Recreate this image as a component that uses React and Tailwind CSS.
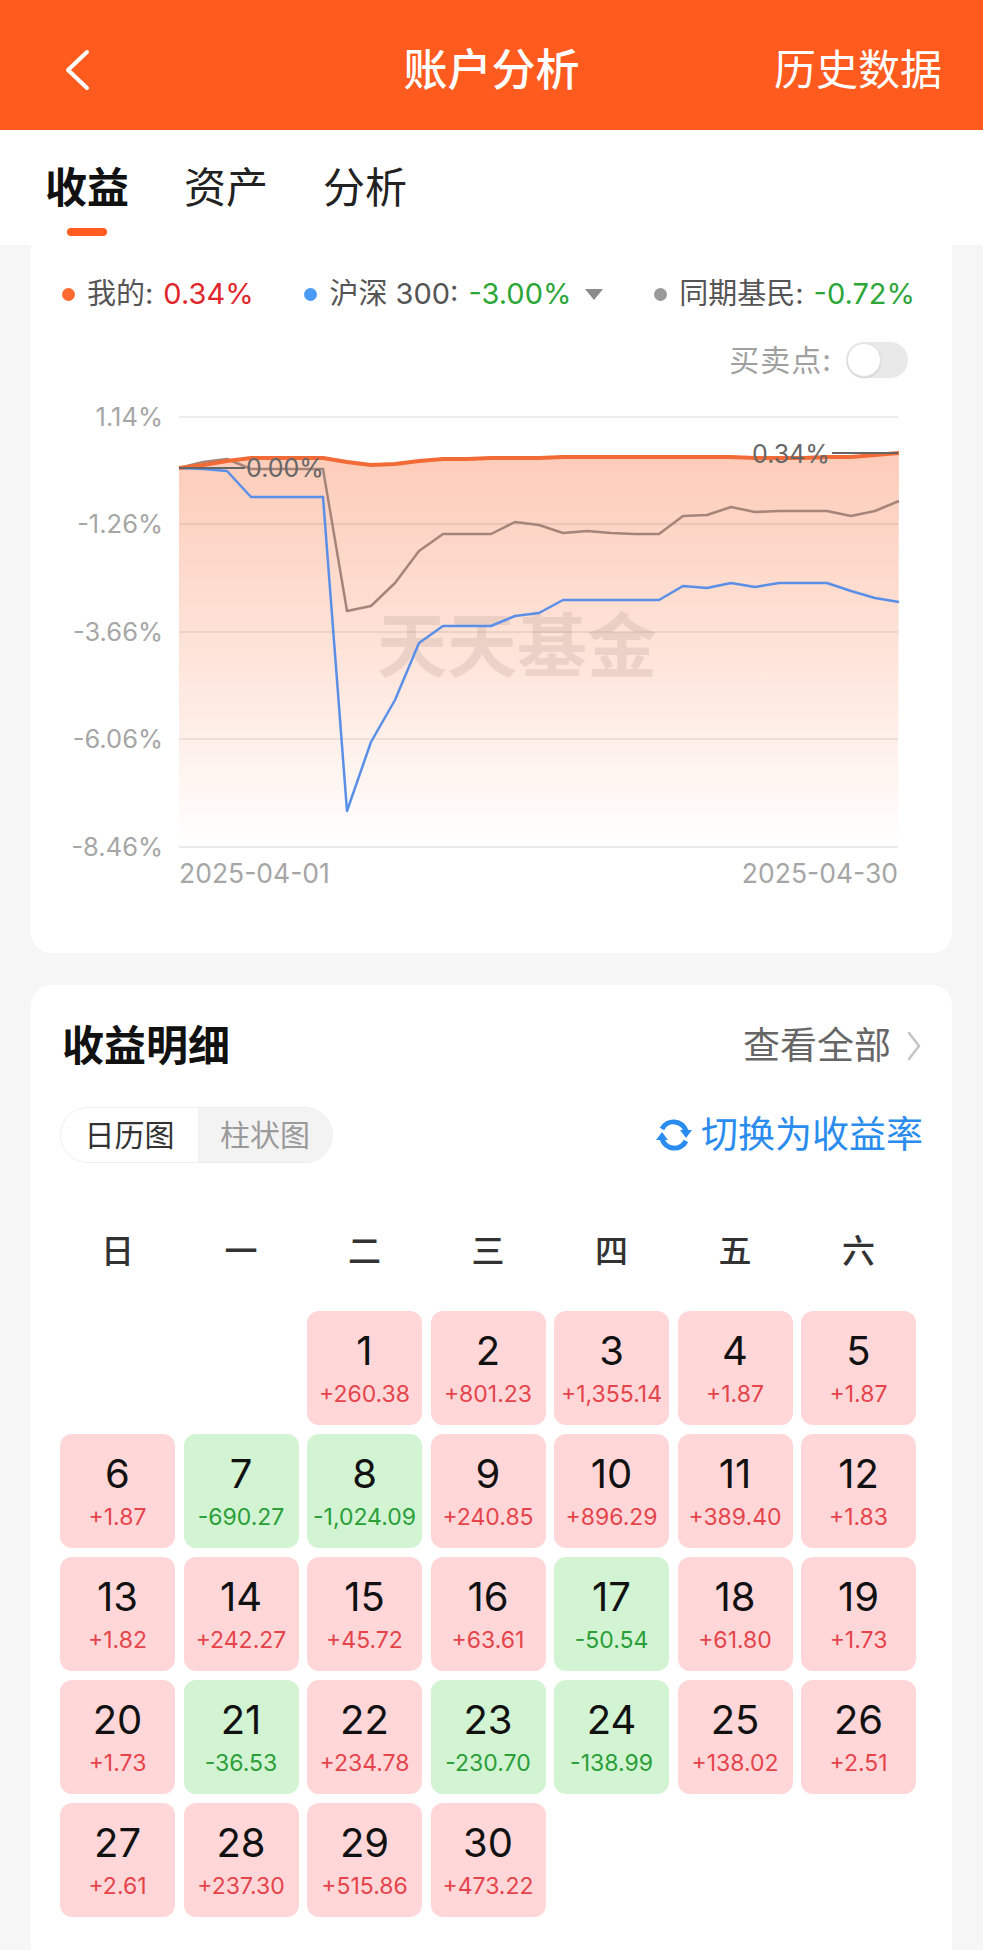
import React from "react";

const orange = [468,465,461,458,458,458,458,462,465,464,461,459,459,458,458,458,457,457,457,457,457,457,457,457,458,458,458,457,457,455,453];
const gray = [468,462,459,469,469,469,469,611,606,583,551,534,534,534,522,525,533,531,533,534,534,516,515,507,512,511,511,511,516,511,501];
const blue = [468,469,471,497,497,497,497,811,742,700,643,626,626,626,616,613,600,600,600,600,600,586,588,583,587,583,583,583,591,598,602];
const X = (i) => 179 + 24 * i;
const pts = (arr) => arr.map((y, i) => `${X(i)},${y}`).join(" ");

const days = [
  null, null,
  ["1", "+260.38"], ["2", "+801.23"], ["3", "+1,355.14"], ["4", "+1.87"], ["5", "+1.87"],
  ["6", "+1.87"], ["7", "-690.27"], ["8", "-1,024.09"], ["9", "+240.85"], ["10", "+896.29"], ["11", "+389.40"], ["12", "+1.83"],
  ["13", "+1.82"], ["14", "+242.27"], ["15", "+45.72"], ["16", "+63.61"], ["17", "-50.54"], ["18", "+61.80"], ["19", "+1.73"],
  ["20", "+1.73"], ["21", "-36.53"], ["22", "+234.78"], ["23", "-230.70"], ["24", "-138.99"], ["25", "+138.02"], ["26", "+2.51"],
  ["27", "+2.61"], ["28", "+237.30"], ["29", "+515.86"], ["30", "+473.22"],
];

function Chart() {
  const fill = `M179,468 L${pts(orange)} L898,847 L179,847 Z`;
  const grid = [417, 524, 632, 739];
  const ylabels = [["1.14%", 417], ["-1.26%", 524], ["-3.66%", 632], ["-6.06%", 739], ["-8.46%", 847]];
  return (
    <svg width="921" height="510" viewBox="31 395 921 510" className="block mt-[17px]">
      <defs>
        <linearGradient id="fg" x1="0" y1="453" x2="0" y2="847" gradientUnits="userSpaceOnUse">
          <stop offset="0" stopColor="#FDCCB9" />
          <stop offset="0.55" stopColor="#FEE6DC" />
          <stop offset="1" stopColor="#FFFFFF" />
        </linearGradient>
      </defs>
      <path d={fill} fill="url(#fg)" />
      {grid.map((y) => (
        <line key={y} x1="179" x2="898" y1={y} y2={y} stroke="#000" strokeOpacity="0.07" strokeWidth="2" />
      ))}
      <line x1="179" x2="898" y1="847" y2="847" stroke="#EAEAEA" strokeWidth="2" />
      {ylabels.map(([t, y]) => (
        <text key={t} x="163" y={y + 9} textAnchor="end" fontSize="25.5" fill="#A6A6A6">{t}</text>
      ))}
      <text x="179" y="883" fontSize="26.5" fill="#A6A6A6">2025-04-01</text>
      <text x="898" y="883" textAnchor="end" fontSize="26.5" fill="#A6A6A6">2025-04-30</text>
      <text x="517" y="672" textAnchor="middle" fontSize="70" fontWeight="700" fill="#A89088" fillOpacity="0.22">天天基金</text>
      <polyline points={pts(gray)} fill="none" stroke="#A5857A" strokeWidth="2.5" strokeLinejoin="round" />
      <polyline points={pts(blue)} fill="none" stroke="#5A8FE8" strokeWidth="2.5" strokeLinejoin="round" />
      <polyline points={pts(orange)} fill="none" stroke="#F26A35" strokeWidth="4" strokeLinejoin="round" />
      <line x1="179" x2="245" y1="468" y2="468" stroke="#666" strokeWidth="2" />
      <text x="246" y="477" fontSize="25" fill="#666">0.00%</text>
      <line x1="832" x2="898" y1="453" y2="453" stroke="#666" strokeWidth="2" />
      <text x="752" y="463" fontSize="25" fill="#666">0.34%</text>
    </svg>
  );
}

function RefreshIcon() {
  return (
    <svg width="38" height="38" viewBox="0 0 38 38" className="block">
      <path d="M7 13 A13 13 0 0 1 31 15" fill="none" stroke="#2A8CEE" strokeWidth="5" />
      <polygon points="25,14 37,14 31,22" fill="#2A8CEE" />
      <path d="M31 25 A13 13 0 0 1 7 23" fill="none" stroke="#2A8CEE" strokeWidth="5" />
      <polygon points="1,24 13,24 7,16" fill="#2A8CEE" />
    </svg>
  );
}

export default function App() {
  return (
    <div className="w-[983px] min-h-[1950px] bg-[#F6F6F6] font-['Inter','Noto_Sans_CJK_SC',sans-serif] overflow-hidden">
      {/* Header */}
      <div className="h-[130px] bg-[#FF5B1F] grid grid-cols-[1fr_auto_1fr] items-center pt-[10px] text-white">
        <div className="pl-[63px]">
          <svg width="28" height="44" viewBox="0 0 28 44" className="block">
            <polyline points="24,4 5,22 24,40" fill="none" stroke="#fff" strokeWidth="4" strokeLinecap="round" strokeLinejoin="round" />
          </svg>
        </div>
        <div className="text-[44px] leading-[50px] font-medium">账户分析</div>
        <div className="justify-self-end pr-[41px] text-[42px] leading-[50px]">历史数据</div>
      </div>

      {/* Tabs */}
      <div className="h-[115px] bg-white flex gap-[55px] pl-[45px] pt-[33px]">
        <div className="flex flex-col items-center">
          <div className="text-[42px] leading-[50px] font-bold text-[#111]">收益</div>
          <div className="mt-[15px] w-[40px] h-[8px] rounded-full bg-[#FF5B1F]" />
        </div>
        <div className="text-[42px] leading-[50px] text-[#222]">资产</div>
        <div className="text-[42px] leading-[50px] text-[#222]">分析</div>
      </div>

      {/* Chart card */}
      <div className="mx-[31px] bg-white rounded-b-[20px] pt-[29px] pb-[48px]">
        <div className="flex items-center justify-between pl-[31px] pr-[37px] h-[40px] text-[29px] leading-[40px] text-[#555]">
          <div className="flex items-center">
            <span className="w-[13px] h-[13px] rounded-full bg-[#FF6A33] mr-[12px]" />
            <span>我的:</span>
            <span className="ml-[10px] text-[#E0262B]">0.34%</span>
          </div>
          <div className="flex items-center">
            <span className="w-[13px] h-[13px] rounded-full bg-[#4A9AF5] mr-[12px]" />
            <span>沪深 300:</span>
            <span className="ml-[10px] text-[#2BA637]">-3.00%</span>
            <svg width="18" height="11" viewBox="0 0 18 11" className="ml-[14px] block">
              <polygon points="0,0 18,0 9,11" fill="#8A8A8A" />
            </svg>
          </div>
          <div className="flex items-center">
            <span className="w-[13px] h-[13px] rounded-full bg-[#9A9A9A] mr-[12px]" />
            <span>同期基民:</span>
            <span className="ml-[10px] text-[#2BA637]">-0.72%</span>
          </div>
        </div>

        <div className="mt-[28px] flex justify-end items-center pr-[44px] h-[36px]">
          <span className="text-[30px] leading-[36px] text-[#A0A0A0] tracking-[1px]">买卖点:</span>
          <div className="ml-[14px] w-[62px] h-[36px] rounded-full bg-[#E9E9E9] p-[1px]">
            <div className="w-[34px] h-[34px] rounded-full bg-white border border-[#E2E2E2] shadow-[0_1px_2px_rgba(0,0,0,0.12)]" />
          </div>
        </div>

        <Chart />
      </div>

      {/* Detail card */}
      <div className="mx-[31px] mt-[32px] bg-white rounded-t-[20px] pt-[36px] pb-[33px]">
        <div className="flex items-center justify-between px-[31px] h-[50px]">
          <div className="text-[42px] leading-[50px] font-bold text-[#111]">收益明细</div>
          <div className="flex items-center">
            <span className="text-[37px] leading-[50px] text-[#666]">查看全部</span>
            <svg width="14" height="30" viewBox="0 0 14 30" className="ml-[16px] block">
              <polyline points="2,2 12,15 2,28" fill="none" stroke="#C4C4C4" strokeWidth="2.5" strokeLinecap="round" strokeLinejoin="round" />
            </svg>
          </div>
        </div>

        <div className="mt-[36px] flex items-center justify-between pl-[29px] pr-[29px] h-[56px]">
          <div className="flex h-[56px] w-[273px] rounded-full border border-[#EDEDED] overflow-hidden">
            <div className="w-[137px] bg-white flex items-center justify-center text-[30px] text-[#333]">日历图</div>
            <div className="flex-1 bg-[#F3F3F3] flex items-center justify-center text-[30px] text-[#9A9A9A]">柱状图</div>
          </div>
          <div className="flex items-center text-[#2A8CEE]">
            <RefreshIcon />
            <span className="ml-[8px] text-[37px] leading-[50px]">切换为收益率</span>
          </div>
        </div>

        <div className="mt-[68px] pl-[29px] grid grid-cols-[repeat(7,115px)] gap-x-[8.5px] h-[40px]">
          {["日", "一", "二", "三", "四", "五", "六"].map((d) => (
            <div key={d} className="text-center text-[33px] leading-[40px] font-medium text-[#333]">{d}</div>
          ))}
        </div>

        <div className="mt-[40px] pl-[29px] grid grid-cols-[repeat(7,115px)] gap-x-[8.5px] gap-y-[9px]">
          {days.map((d, i) => {
            if (!d) return <div key={i} className="h-[114px]" />;
            const neg = d[1].startsWith("-");
            return (
              <div
                key={i}
                className={
                  neg
                    ? "h-[114px] rounded-[12px] bg-[#D2F4D3] flex flex-col items-center pt-[20px]"
                    : "h-[114px] rounded-[12px] bg-[#FFD7D9] flex flex-col items-center pt-[20px]"
                }
              >
                <div className="text-[40px] leading-[40px] text-[#111]">{d[0]}</div>
                <div className={neg ? "mt-[11px] text-[23px] leading-[24px] text-[#2A9E38] whitespace-nowrap" : "mt-[11px] text-[23px] leading-[24px] text-[#E5444A] whitespace-nowrap"}>
                  {d[1]}
                </div>
              </div>
            );
          })}
        </div>
      </div>
    </div>
  );
}
